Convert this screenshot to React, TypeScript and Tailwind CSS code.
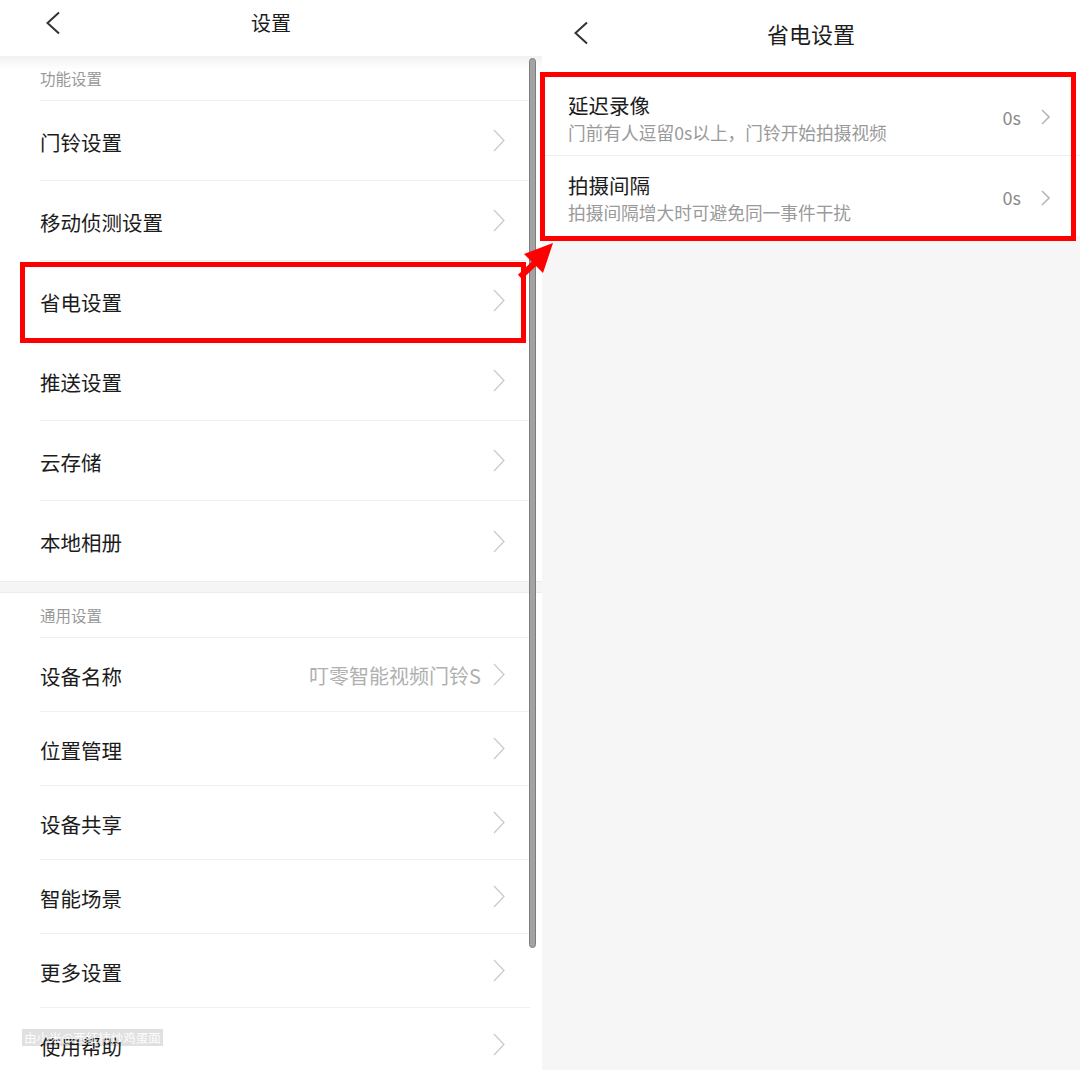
import React from "react";

const FONT = "font-['Noto_Sans_CJK_SC','Noto_Sans',sans-serif]";

function Chevron({ className = "" }: { className?: string }) {
  return (
    <svg width="12" height="23" viewBox="0 0 12 23" className={className} aria-hidden>
      <polyline points="1,1 11,11.5 1,22" fill="none" stroke="#c9c9c9" strokeWidth="1.2" />
    </svg>
  );
}

function BackArrow() {
  return (
    <svg width="16" height="24" viewBox="0 0 16 24" aria-hidden>
      <polyline points="14,1.5 2.5,12 14,22.5" fill="none" stroke="#333" strokeWidth="2" />
    </svg>
  );
}

function SectionLabel({ text }: { text: string }) {
  return (
    <div className="pl-[40px] pr-[12px] h-[45px]">
      <div className="h-full flex items-center pt-[2px] border-b border-[#efefef] text-[15.5px] text-[#999]">{text}</div>
    </div>
  );
}

function Row({ label, value, h, last }: { label: string; value?: string; h: string; last?: boolean }) {
  return (
    <div className="pl-[40px] pr-[12px]">
      <div
        className={`${h} flex items-center justify-between pr-[25px] ${
          last ? "" : "border-b border-[#efefef]"
        }`}
      >
        <span className="pt-[3px] text-[20.5px] text-[#1c1c1c]">{label}</span>
        <div className="flex items-center gap-[12px]">
          {value && <span className="pt-[3px] text-[20px] text-[#b0b0b0]">{value}</span>}
          <Chevron />
        </div>
      </div>
    </div>
  );
}

const group1 = ["门铃设置", "移动侦测设置", "省电设置", "推送设置", "云存储", "本地相册"];
const group2: { label: string; value?: string }[] = [
  { label: "设备名称", value: "叮零智能视频门铃S" },
  { label: "位置管理" },
  { label: "设备共享" },
  { label: "智能场景" },
  { label: "更多设置" },
  { label: "使用帮助" },
];

const powerRows = [
  { title: "延迟录像", sub: "门前有人逗留0s以上，门铃开始拍摄视频", value: "0s" },
  { title: "拍摄间隔", sub: "拍摄间隔增大时可避免同一事件干扰", value: "0s" },
];

export default function App() {
  return (
    <div className={`relative flex h-[1070px] w-[1080px] overflow-hidden bg-white ${FONT}`}>
      {/* left: 设置 */}
      <div className="relative w-[542px] shrink-0 bg-white">
        <div className="grid grid-cols-[1fr_auto_1fr] items-center h-[56px] pb-[10px]">
          <div className="pl-[45px] flex">
            <BackArrow />
          </div>
          <span className="text-[20px] text-[#1c1c1c]">设置</span>
          <div />
        </div>
        <div className="bg-[linear-gradient(to_bottom,#f1f1f1,#ffffff_14px)]">
          <SectionLabel text="功能设置" />
        </div>
        {group1.map((l, i) => (
          <Row key={l} label={l} h="h-[80px]" last={i === group1.length - 1} />
        ))}
        <div className="h-[12px] bg-[#f5f5f5] border-y border-[#ececec]" />
        <SectionLabel text="通用设置" />
        {group2.map((r) => (
          <Row key={r.label} label={r.label} value={r.value} h="h-[74px]" />
        ))}

        {/* scrollbar */}
        <div className="absolute left-[529px] top-[58px] w-[7px] h-[890px] rounded-full bg-[#a3a3a3] border border-[#7d7d7d]" />
      </div>

      {/* right: 省电设置 */}
      <div className="flex-1 flex flex-col bg-[#f6f6f6]">
        <div className="grid grid-cols-[1fr_auto_1fr] items-center h-[76px] pb-[10px] bg-white">
          <div className="pl-[31px] flex">
            <BackArrow />
          </div>
          <span className="text-[22px] text-[#1c1c1c]">省电设置</span>
          <div />
        </div>
        <div className="bg-white">
          {powerRows.map((r, i) => (
            <div
              key={r.title}
              className={`h-[80px] flex items-center justify-between pl-[26px] pr-[30px] pt-[3px] ${
                i === 0 ? "border-b border-[#efefef]" : ""
              }`}
            >
              <div className="flex flex-col gap-[1px]">
                <span className="text-[20.5px] leading-[28px] text-[#1c1c1c]">{r.title}</span>
                <span className="text-[17.7px] leading-[24px] text-[#9a9a9a]">{r.sub}</span>
              </div>
              <div className="flex items-center gap-[20px]">
                <span className="text-[18px] text-[#8a8a8a]">{r.value}</span>
                <svg width="9" height="16" viewBox="0 0 9 16" aria-hidden>
                  <polyline points="1,1 8,8 1,15" fill="none" stroke="#b8b8b8" strokeWidth="1.6" />
                </svg>
              </div>
            </div>
          ))}
        </div>
      </div>

      {/* annotations */}
      <div className="absolute left-[20px] top-[262px] w-[506px] h-[81px] border-[5px] border-[#f00]" />
      <div className="absolute left-[540px] top-[72px] w-[536px] h-[169px] border-[5px] border-[#f00]" />
      <svg className="absolute left-0 top-0" width="1080" height="1070" viewBox="0 0 1080 1070" aria-hidden>
        <line x1="520" y1="277" x2="538" y2="260" stroke="#f00" strokeWidth="6" />
        <polygon points="553,243 524,254 543,273" fill="#f00" />
      </svg>

      {/* watermark */}
      <div className="absolute left-[22px] top-[1029px] px-[2px] bg-[rgba(0,0,0,0.12)] text-[12.5px] leading-[17px] text-white/90">
        由小米@西红柿炒鸡蛋面
      </div>
    </div>
  );
}
